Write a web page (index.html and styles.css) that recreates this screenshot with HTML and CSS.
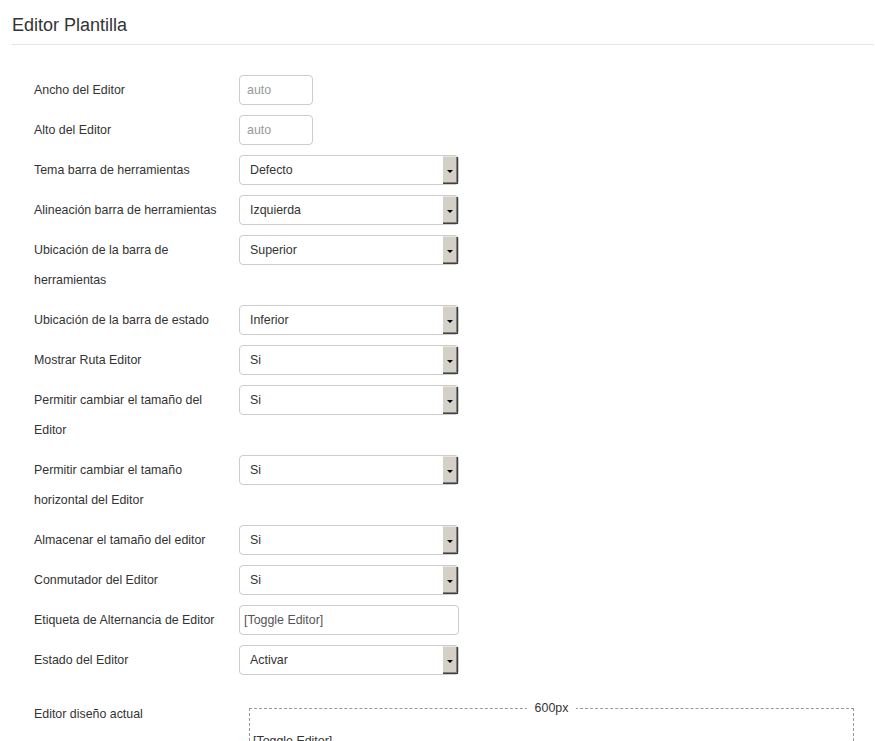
FILE: index.html
```html
<!DOCTYPE html>
<html lang="es">
<head>
<meta charset="utf-8">
<title>Editor Plantilla</title>
<link rel="stylesheet" href="styles.css">
</head>
<body>
<div class="page">
  <h2 class="title">Editor Plantilla</h2>
  <div class="form">
    <div class="row"><label class="label">Ancho del Editor</label><input class="input small" type="text" placeholder="auto"></div>
    <div class="row"><label class="label">Alto del Editor</label><input class="input small" type="text" placeholder="auto"></div>
    <div class="row"><label class="label">Tema barra de herramientas</label><div class="select"><span class="value">Defecto</span><span class="arrow"><span class="tri"></span></span></div></div>
    <div class="row"><label class="label">Alineación barra de herramientas</label><div class="select"><span class="value">Izquierda</span><span class="arrow"><span class="tri"></span></span></div></div>
    <div class="row"><label class="label">Ubicación de la barra de herramientas</label><div class="select"><span class="value">Superior</span><span class="arrow"><span class="tri"></span></span></div></div>
    <div class="row"><label class="label">Ubicación de la barra de estado</label><div class="select"><span class="value">Inferior</span><span class="arrow"><span class="tri"></span></span></div></div>
    <div class="row"><label class="label">Mostrar Ruta Editor</label><div class="select"><span class="value">Si</span><span class="arrow"><span class="tri"></span></span></div></div>
    <div class="row"><label class="label">Permitir cambiar el tamaño del Editor</label><div class="select"><span class="value">Si</span><span class="arrow"><span class="tri"></span></span></div></div>
    <div class="row"><label class="label">Permitir cambiar el tamaño horizontal del Editor</label><div class="select"><span class="value">Si</span><span class="arrow"><span class="tri"></span></span></div></div>
    <div class="row"><label class="label">Almacenar el tamaño del editor</label><div class="select"><span class="value">Si</span><span class="arrow"><span class="tri"></span></span></div></div>
    <div class="row"><label class="label">Conmutador del Editor</label><div class="select"><span class="value">Si</span><span class="arrow"><span class="tri"></span></span></div></div>
    <div class="row"><label class="label">Etiqueta de Alternancia de Editor</label><input class="input wide" type="text" value="[Toggle Editor]"></div>
    <div class="row"><label class="label">Estado del Editor</label><div class="select"><span class="value">Activar</span><span class="arrow"><span class="tri"></span></span></div></div>
    <div class="row preview-row">
      <label class="label">Editor diseño actual</label>
      <fieldset class="preview">
        <legend class="legend">600px</legend>
        <span class="toggle">[Toggle Editor]</span>
      </fieldset>
    </div>
  </div>
</div>
</body>
</html>
```
FILE: styles.css
```css
html, body {
  margin: 0;
  padding: 0;
  background: #fff;
  overflow: hidden;
}
body {
  font-family: "Liberation Sans", Arial, sans-serif;
  color: #333;
  font-size: 12.4px;
}
.page {
  padding: 0 1px 0 12px;
}
.title {
  margin: 0;
  padding: 15px 0 9px;
  font-size: 18px;
  line-height: 20px;
  font-weight: normal;
  color: #333;
  border-bottom: 1px solid #e5e5e5;
}
.form {
  padding: 30px 0 0 22px;
}
.row {
  display: flex;
  align-items: flex-start;
  margin-bottom: 10px;
}
.label {
  width: 195px;
  margin-right: 10px;
  line-height: 30px;
  font-size: 12.4px;
  color: #333;
}
.input {
  box-sizing: border-box;
  height: 30px;
  border: 1px solid #ccc;
  border-radius: 4px;
  margin: 0;
  font-family: "Liberation Sans", Arial, sans-serif;
  font-size: 12.4px;
  color: #555;
  background: #fff;
  outline: none;
}
.input::placeholder {
  color: #999;
}
.small {
  width: 74px;
  padding: 0 7px;
}
.wide {
  width: 220px;
  padding: 0 4px;
}
.select {
  box-sizing: border-box;
  width: 220px;
  height: 30px;
  border: 1px solid #ccc;
  border-radius: 4px;
  display: flex;
  align-items: center;
  padding: 0 0 0 10px;
  background: #fff;
}
.value {
  flex: 1;
  color: #333;
  font-size: 12.4px;
}
.arrow {
  box-sizing: border-box;
  width: 16px;
  height: 28px;
  background: #d4d0c8;
  border-top: 1px solid #e8e6e0;
  border-left: 1px solid #fff;
  box-shadow: inset -1px -1px 0 #404040, inset -2px -2px 0 #808080;
  display: flex;
  align-items: center;
  justify-content: center;
  padding-right: 2px;
}
.tri {
  width: 0;
  height: 0;
  border-left: 3px solid transparent;
  border-right: 3px solid transparent;
  border-top: 3px solid #000;
  margin-top: 1px;
}
.preview-row {
  margin-top: 24px;
}
.preview {
  box-sizing: border-box;
  width: 605px;
  margin: 2px 0 0 10px;
  padding: 19px 3px 10px;
  border: 1px dashed #999;
  min-width: 0;
  height: 80px;
}
.legend {
  margin: 0 auto;
  padding: 0 8px;
  font-size: 12.4px;
  line-height: 14px;
  color: #333;
}
.toggle {
  color: #333;
  font-size: 12.4px;
}
```
